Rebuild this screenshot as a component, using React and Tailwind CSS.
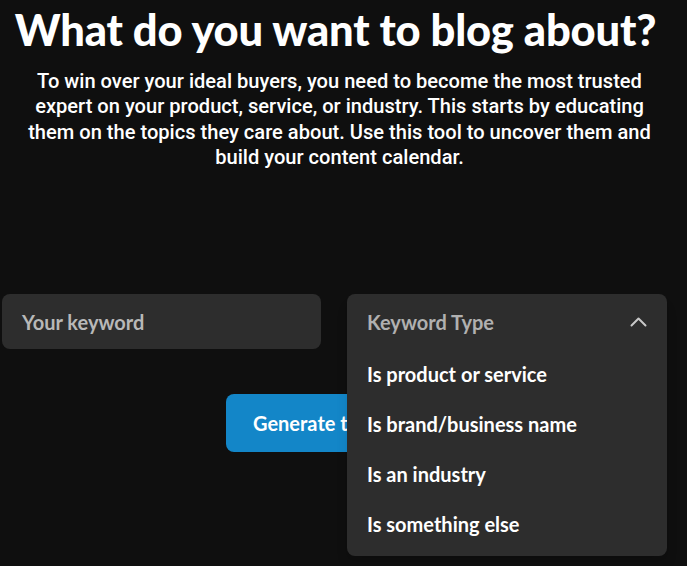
import React from "react";

export default function App() {
  const options = [
    "Is product or service",
    "Is brand/business name",
    "Is an industry",
    "Is something else",
  ];
  const lines = [
    "To win over your ideal buyers, you need to become the most trusted",
    "expert on your product, service, or industry. This starts by educating",
    "them on the topics they care about. Use this tool to uncover them and",
    "build your content calendar.",
  ];
  return (
    <div className="min-h-[566px] w-full bg-[#0f0f0f] text-white overflow-hidden" style={{ fontFamily: "Lato, 'Noto Sans', sans-serif" }}>
      <h1 className="pt-[3px] pr-[16px] text-center text-[43.5px] leading-[52px] font-black tracking-[-0.2px]">
        What do you want to blog about?
      </h1>
      <p className="mt-[14px] pr-[8px] text-center text-[20.1px] leading-[25.3px] font-medium" style={{ fontFamily: "Roboto, sans-serif" }}>
        {lines.map((l, i) => (
          <React.Fragment key={i}>
            {l}
            {i < lines.length - 1 && <br />}
          </React.Fragment>
        ))}
      </p>
      <div className="mt-[124px] flex gap-[26px] pl-[2px]">
        <div className="flex h-[55px] w-[319px] items-center rounded-lg bg-[#2d2d2d] px-[20px]">
          <span className="text-[20px] font-bold text-[#b8b8b8]">Your keyword</span>
        </div>
        <div className="relative h-[55px] w-[320px]">
          <div className="absolute left-0 top-0 z-10 w-[320px] rounded-lg bg-[#2d2d2d] pb-[7px] shadow-lg">
            <div className="flex h-[55px] items-center justify-between pl-[20px] pr-[20px]">
              <span className="text-[20px] font-bold text-[#b0b0b0]">Keyword Type</span>
              <svg width="17" height="11" viewBox="0 0 17 11" fill="none" stroke="#c8c8c8" strokeWidth="2" strokeLinecap="round" strokeLinejoin="round">
                <path d="M1.5 9.5L8.5 2.5L15.5 9.5" />
              </svg>
            </div>
            <div className="flex flex-col">
              {options.map((o) => (
                <div key={o} className="flex h-[50px] items-center px-[20px] text-[20px] font-bold text-white">
                  {o}
                </div>
              ))}
            </div>
          </div>
        </div>
      </div>
      <div className="mt-[45px] flex pl-[226px]">
        <button className="h-[58px] rounded-lg bg-[#1386c8] px-[27px] text-[20px] font-bold text-white" style={{ fontFamily: "Lato, sans-serif" }}>
          Generate topics
        </button>
      </div>
    </div>
  );
}
